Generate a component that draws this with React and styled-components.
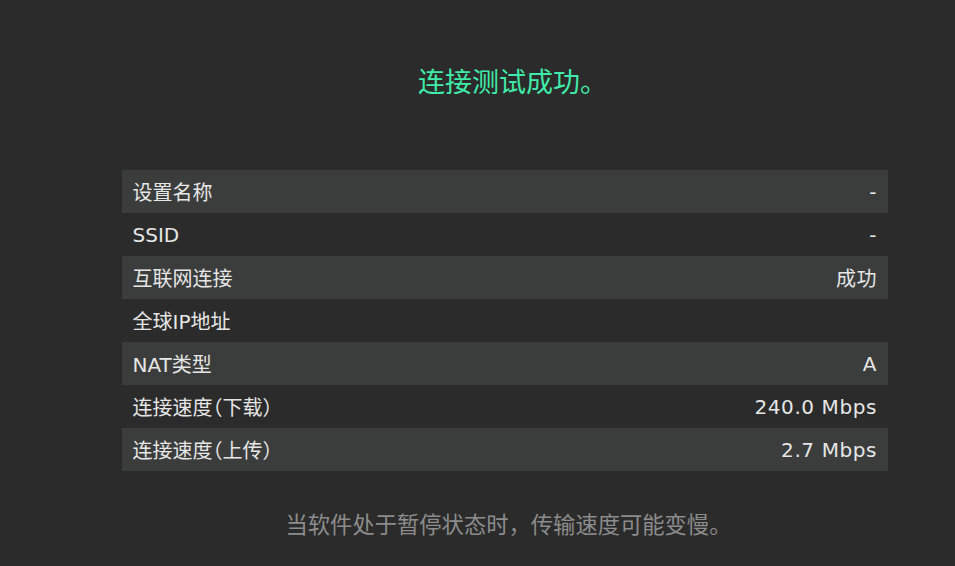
import React from "react";
import styled, { createGlobalStyle } from "styled-components";

const Global = createGlobalStyle`
  html, body { margin: 0; padding: 0; background: #2b2b2b; }
  body { font-family: "Noto Sans", "Noto Sans CJK SC", sans-serif; }
`;

const Page = styled.div`
  width: 955px;
  height: 566px;
  background: #2b2b2b;
  display: flex;
  flex-direction: column;
  align-items: center;
  box-sizing: border-box;
  padding-top: 63px;
  padding-left: 50px;
  overflow: hidden;
`;

const Title = styled.h1`
  margin: 0 0 0 20px;
  font-size: 27px;
  line-height: 38px;
  font-weight: 400;
  color: #40eaa8;
`;

const Table = styled.div`
  margin-top: 69px;
  width: 766px;
  margin-left: 4px;
  display: flex;
  flex-direction: column;
`;

const Row = styled.div`
  height: 43px;
  display: flex;
  align-items: center;
  justify-content: space-between;
  padding: 0 11px;
  box-sizing: border-box;
  background: ${(p) => (p.$shaded ? "#3b3d3c" : "transparent")};
  color: #e6e6e6;
  font-family: "DejaVu Sans", "Noto Sans CJK SC", sans-serif;
  font-size: 20px;
  font-feature-settings: "halt";
`;

const Label = styled.span``;
const Value = styled.span`
  letter-spacing: 0.6px;
  margin-right: -0.6px;
`;

const Note = styled.p`
  margin: 39px 0 0;
  margin-left: 12px;
  font-size: 22.3px;
  line-height: 30px;
  color: #8c8c8c;
`;

const rows = [
  ["设置名称", "-"],
  ["SSID", "-"],
  ["互联网连接", "成功"],
  ["全球IP地址", ""],
  ["NAT类型", "A"],
  ["连接速度（下载）", "240.0 Mbps"],
  ["连接速度（上传）", "2.7 Mbps"],
];

export default function App() {
  return (
    <>
      <Global />
      <Page>
        <Title>连接测试成功。</Title>
        <Table>
          {rows.map(([l, v], i) => (
            <Row key={l} $shaded={i % 2 === 0}>
              <Label>{l}</Label>
              <Value>{v}</Value>
            </Row>
          ))}
        </Table>
        <Note>当软件处于暂停状态时，传输速度可能变慢。</Note>
      </Page>
    </>
  );
}
